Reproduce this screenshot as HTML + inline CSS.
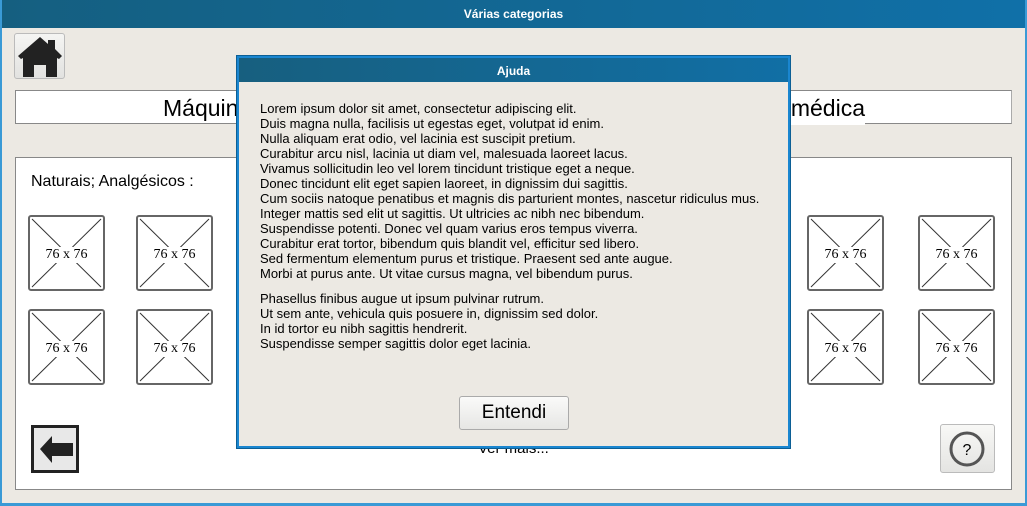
<!DOCTYPE html>
<html><head><meta charset="utf-8"><style>
*{margin:0;padding:0;box-sizing:border-box}
body{width:1027px;height:506px;position:relative;overflow:hidden;background:#ece9e3;font-family:"Liberation Sans",sans-serif}
.a{position:absolute}
.tb{left:0;top:0;width:1027px;height:28px;background:linear-gradient(90deg,#155f80,#1070a8);color:#fff;font-weight:bold;font-size:12px;text-align:center;line-height:28px}
.img{width:77px;height:76px;border:2px solid #666;border-radius:3px;background:#fff}
.img span{position:absolute;left:0;right:0;top:30px;text-align:center;font-family:"Liberation Serif",serif;font-size:14px}
.dlg{left:237px;top:56px;width:553px;height:392px;background:#ece9e3;border:2px solid #1a86d0;outline:1px solid #0c5f95}
.dtb{left:0;top:0;width:549px;height:24px;background:linear-gradient(90deg,#175f7f,#116fa5);color:#fff;font-weight:bold;font-size:12px;text-align:center;line-height:26px}
.txt{left:21px;font-size:13px;line-height:15px;color:#000;white-space:pre}
</style></head><body>
<div class="a tb">Várias categorias</div>
<div class="a" style="left:0;top:0;width:2px;height:506px;background:#3a9ad6"></div>
<div class="a" style="right:0;top:0;width:2px;height:506px;background:#3a9ad6"></div>
<div class="a" style="left:0;bottom:0;width:1027px;height:3px;background:#3a9ad6"></div>
<div class="a" style="left:14px;top:33px;width:51px;height:46px;border:1px solid #bbb;border-radius:3px;background:linear-gradient(#f5f5f3,#e2e2e0)">
<svg width="51" height="46" viewBox="0 0 51 46"><path d="M3 22 L25 3 L33 10 L33 6 L40 6 L40 15 L47 22 L44 25 L42 24 L42 43 L31 43 L31 31 L19 31 L19 43 L8 43 L8 24 L6 25Z" fill="#222"/></svg></div>
<div class="a" style="left:15px;top:90px;width:997px;height:34px;background:#fff;border:1px solid #888;border-right-color:#aaa;font-size:23px;line-height:34px">
<span class="a" style="left:147px">Máquinas e equipamentos de tecnologia</span><span class="a" style="right:146px;background:#fff">médica</span></div>
<div class="a" style="left:15px;top:157px;width:997px;height:333px;background:#fff;border:1px solid #888">
<div class="a" style="left:15px;top:15px;font-size:16px">Naturais; Analgésicos :</div>
<div class="a" style="left:462px;top:282px;font-size:15px">Ver mais...</div>
</div>
<div class="a img" style="left:28px;top:215px"><svg class="a" width="73" height="72"><path d="M2 2L71 70M71 2L2 70" stroke="#333"/><rect x="14" y="30" width="46" height="16" fill="#fff"/></svg><span>76 x 76</span></div>
<div class="a img" style="left:136px;top:215px"><svg class="a" width="73" height="72"><path d="M2 2L71 70M71 2L2 70" stroke="#333"/><rect x="14" y="30" width="46" height="16" fill="#fff"/></svg><span>76 x 76</span></div>
<div class="a img" style="left:28px;top:309px"><svg class="a" width="73" height="72"><path d="M2 2L71 70M71 2L2 70" stroke="#333"/><rect x="14" y="30" width="46" height="16" fill="#fff"/></svg><span>76 x 76</span></div>
<div class="a img" style="left:136px;top:309px"><svg class="a" width="73" height="72"><path d="M2 2L71 70M71 2L2 70" stroke="#333"/><rect x="14" y="30" width="46" height="16" fill="#fff"/></svg><span>76 x 76</span></div>
<div class="a img" style="left:807px;top:215px"><svg class="a" width="73" height="72"><path d="M2 2L71 70M71 2L2 70" stroke="#333"/><rect x="14" y="30" width="46" height="16" fill="#fff"/></svg><span>76 x 76</span></div>
<div class="a img" style="left:918px;top:215px"><svg class="a" width="73" height="72"><path d="M2 2L71 70M71 2L2 70" stroke="#333"/><rect x="14" y="30" width="46" height="16" fill="#fff"/></svg><span>76 x 76</span></div>
<div class="a img" style="left:807px;top:309px"><svg class="a" width="73" height="72"><path d="M2 2L71 70M71 2L2 70" stroke="#333"/><rect x="14" y="30" width="46" height="16" fill="#fff"/></svg><span>76 x 76</span></div>
<div class="a img" style="left:918px;top:309px"><svg class="a" width="73" height="72"><path d="M2 2L71 70M71 2L2 70" stroke="#333"/><rect x="14" y="30" width="46" height="16" fill="#fff"/></svg><span>76 x 76</span></div>
<div class="a" style="left:31px;top:425px;width:48px;height:48px;background:#e8e8e8;border:3px solid #222">
<svg width="42" height="42"><path d="M6 21 L18 8 L18 15 L39 15 L39 28 L18 28 L18 35Z" fill="#222"/></svg></div>
<div class="a" style="left:940px;top:424px;width:55px;height:49px;border:1px solid #bbb;border-radius:3px;background:linear-gradient(#f8f8f6,#e4e4e2)">
<svg width="53" height="47"><circle cx="26" cy="24" r="16" fill="none" stroke="#555" stroke-width="3"/><text x="26" y="30" font-size="16" text-anchor="middle" font-family="Liberation Sans">?</text></svg></div>
<div class="a dlg">
<div class="a dtb">Ajuda</div>
<div class="a txt" style="top:43px">Lorem ipsum dolor sit amet, consectetur adipiscing elit.
Duis magna nulla, facilisis ut egestas eget, volutpat id enim.
Nulla aliquam erat odio, vel lacinia est suscipit pretium.
Curabitur arcu nisl, lacinia ut diam vel, malesuada laoreet lacus.
Vivamus sollicitudin leo vel lorem tincidunt tristique eget a neque.
Donec tincidunt elit eget sapien laoreet, in dignissim dui sagittis.
Cum sociis natoque penatibus et magnis dis parturient montes, nascetur ridiculus mus.
Integer mattis sed elit ut sagittis. Ut ultricies ac nibh nec bibendum.
Suspendisse potenti. Donec vel quam varius eros tempus viverra.
Curabitur erat tortor, bibendum quis blandit vel, efficitur sed libero.
Sed fermentum elementum purus et tristique. Praesent sed ante augue.
Morbi at purus ante. Ut vitae cursus magna, vel bibendum purus.</div>
<div class="a txt" style="top:233px">Phasellus finibus augue ut ipsum pulvinar rutrum.
Ut sem ante, vehicula quis posuere in, dignissim sed dolor.
In id tortor eu nibh sagittis hendrerit.
Suspendisse semper sagittis dolor eget lacinia.</div>
<div class="a" style="left:220px;top:338px;width:110px;height:34px;border:1px solid #aaa;border-radius:3px;background:linear-gradient(#fafaf9,#e6e6e4);font-size:19px;text-align:center;line-height:32px">Entendi</div>
</div>
</body></html>
